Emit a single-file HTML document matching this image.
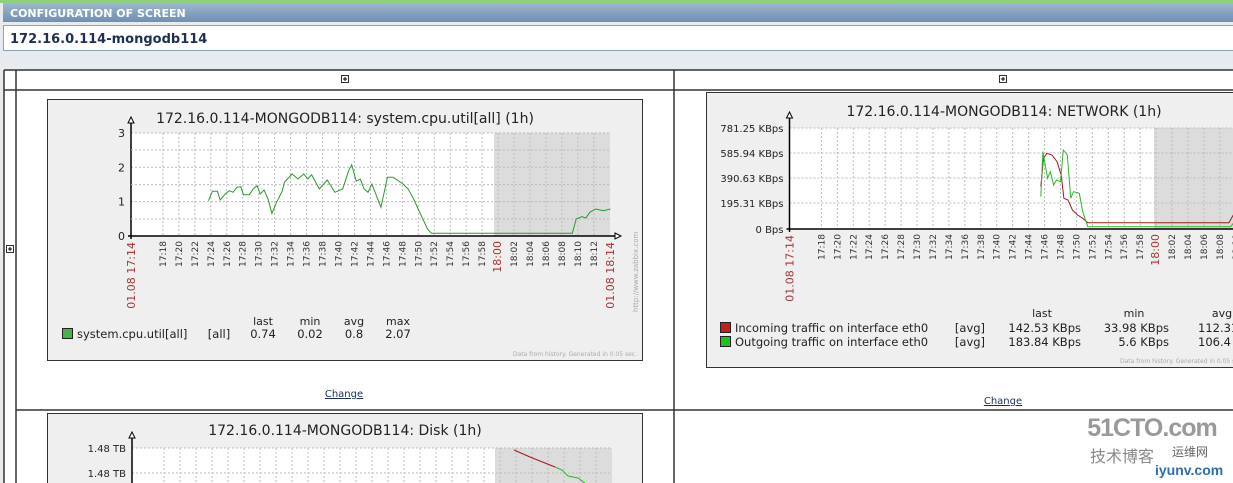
<!DOCTYPE html>
<html><head><meta charset="utf-8"><style>
body{margin:0;width:1233px;height:483px;overflow:hidden;background:#e8ebee;font-family:"DejaVu Sans","Liberation Sans",sans-serif;}
svg{position:absolute;left:0;top:0}
</style></head><body>
<svg id="s" width="1233" height="483" xmlns="http://www.w3.org/2000/svg" font-family="DejaVu Sans, Liberation Sans, sans-serif" overflow="hidden">
<defs><linearGradient id="hg" x1="0" y1="0" x2="0" y2="1"><stop offset="0" stop-color="#9fb6cf"/><stop offset="1" stop-color="#6f8fb2"/></linearGradient></defs>
<rect x="0" y="0" width="1233" height="483" fill="#e8ebee"/>
<rect x="0" y="0" width="1233" height="3" fill="#8fd07a"/>
<rect x="3" y="3" width="1230" height="19" fill="url(#hg)"/>
<text x="10" y="17" font-size="11" font-weight="bold" fill="#fff">CONFIGURATION OF SCREEN</text>
<rect x="3.5" y="25.5" width="1230" height="25" fill="#fff" stroke="#8aa2bc"/>
<text x="10" y="43" font-size="13" font-weight="bold" fill="#1d2f55">172.16.0.114-mongodb114</text>
<rect x="4" y="70" width="1229" height="413" fill="#fff"/>
<g stroke="#333" stroke-width="1.5" fill="none">
<line x1="4" y1="70" x2="1233" y2="70"/>
<line x1="4" y1="70" x2="4" y2="483"/>
<line x1="16" y1="70" x2="16" y2="483"/>
<line x1="674" y1="70" x2="674" y2="483"/>
<line x1="16" y1="90" x2="1233" y2="90"/>
<line x1="16" y1="410" x2="1233" y2="410"/>
<line x1="4" y1="90" x2="16" y2="90"/>
</g>
<g id="plus"></g>
<g id="c1"></g><g id="c2"></g><g id="c3"></g>
<text x="344" y="397" font-size="10" fill="#1d2f55" text-anchor="middle" text-decoration="underline">Change</text>
<text x="1003" y="404" font-size="10" fill="#1d2f55" text-anchor="middle" text-decoration="underline">Change</text>
<text x="1152" y="436" font-size="25" font-weight="bold" fill="#999" text-anchor="middle" font-family="Liberation Sans, sans-serif" letter-spacing="-1">51CTO.com</text>
<text x="1090" y="462" font-size="16" fill="#888" font-family="Noto Sans CJK SC, sans-serif">技术博客</text>
<text x="1172" y="456" font-size="12" fill="#666" font-family="Noto Sans CJK SC, sans-serif">运维网</text>
<text x="1155" y="475" font-size="14" font-weight="bold" fill="#2a6fb0" font-family="Liberation Sans, sans-serif">iyunv.com</text>
</svg>
<script>
var NS="http://www.w3.org/2000/svg";
function el(p,t,a,txt){var e=document.createElementNS(NS,t);for(var k in a)e.setAttribute(k,a[k]);if(txt!=null)e.textContent=txt;document.getElementById(p).appendChild(e);return e;}
function plus(x,y){el("plus","rect",{x:x-3.5,y:y-3.5,width:7,height:7,fill:"#fff",stroke:"#333"});el("plus","line",{x1:x-2,y1:y,x2:x+2,y2:y,stroke:"#000"});el("plus","line",{x1:x,y1:y-2,x2:x,y2:y+2,stroke:"#000"});}
plus(345,79);plus(1003,79);plus(10,249);
function chart(id,o){
 el(id,"rect",{x:o.bx+.5,y:o.by+.5,width:o.bw,height:o.bh,fill:"#efefef",stroke:"#333"});
 el(id,"rect",{x:o.x0,y:o.ytop,width:o.gx-o.x0,height:o.y0-o.ytop,fill:"#fff"});
 el(id,"rect",{x:o.gx,y:o.ytop,width:o.x1-o.gx,height:o.y0-o.ytop,fill:"#dcdcdc"});
 el(id,"text",{x:o.tx,y:o.ty,"font-size":14,fill:"#222","text-anchor":"middle"},o.title);
 var ppm=o.ppm;
 for(var m=4;m<60;m+=2){var x=o.x0+m*ppm;if(x>o.x1+1)break;
  el(id,"line",{x1:x,y1:o.ytop,x2:x,y2:o.y0,stroke:"#bbb","stroke-dasharray":"2,2"});
  var hh=17+Math.floor((14+m)/60),mm=(14+m)%60;var lab=hh+":"+(mm<10?"0":"")+mm;
  if(o.labs!==false){var red=(lab=="18:00");
   el(id,"text",{x:0,y:0,"font-size":red?11:9,fill:red?"#a33":"#333","text-anchor":"end",transform:"translate("+(x+3)+","+(o.y0+5)+") rotate(-90)"},lab);}
 }
 o.yl.forEach(function(v){el(id,"line",{x1:o.x0,y1:v[0],x2:o.x1,y2:v[0],stroke:"#bbb","stroke-dasharray":"2,2"});
  el(id,"text",{x:o.x0-6,y:v[0]+4,"font-size":o.yfs||11,fill:"#222","text-anchor":"end"},v[1]);});
 el(id,"line",{x1:o.x0,y1:o.ytop-10,x2:o.x0,y2:o.y0+3,stroke:"#000","stroke-width":1.5});
 el(id,"line",{x1:o.x0-3,y1:o.y0,x2:o.x1+5,y2:o.y0,stroke:"#000","stroke-width":1.5});
 el(id,"path",{d:"M"+(o.x0-3)+" "+(o.ytop-10)+"l3 -6 3 6z",fill:"#fff",stroke:"#000"});
 if(o.arrowR)el(id,"path",{d:"M"+(o.x1+5)+" "+(o.y0-3)+"l6 3 -6 3z",fill:"#fff",stroke:"#000"});
 if(o.labs!==false){
 el(id,"text",{x:0,y:0,"font-size":11,fill:"#a33","text-anchor":"end",transform:"translate("+(o.x0+4)+","+(o.y0+6)+") rotate(-90)"},"01.08 17:14");
 if(o.endlab)el(id,"text",{x:0,y:0,"font-size":11,fill:"#a33","text-anchor":"end",transform:"translate("+(o.x1+4)+","+(o.y0+6)+") rotate(-90)"},"01.08 18:14");}
}
function curve(id,pts,fx,fy,col){var d=pts.map(function(p,i){return (i?"L":"M")+fx(p[0]).toFixed(1)+" "+fy(p[1]).toFixed(1);}).join(" ");
 el(id,"path",{d:d,fill:"none",stroke:col,"stroke-width":1});}
chart("c1",{bx:47,by:99,bw:595,bh:261,x0:131,x1:610,gx:494,ytop:133,y0:236,ppm:7.98,tx:345,ty:123,title:"172.16.0.114-MONGODB114: system.cpu.util[all] (1h)",
 yl:[[133,"3"],[167.3,"2"],[201.6,"1"],[236,"0"]],arrowR:true,endlab:true});
[150,184.6,219].forEach(function(y){el("c1","line",{x1:131,y1:y,x2:610,y2:y,stroke:"#bbb","stroke-dasharray":"2,2"});});
var p1=[[435,320],[445,292],[458,292],[465,318],[478,300],[488,290],[498,295],[508,280],[518,278],[525,302],[540,302],[550,285],[560,275],[568,300],[578,288],[588,315],[598,358],[610,325],[625,290],[630,265],[650,240],[665,255],[680,240],[690,255],[700,242],[720,285],[740,258],[760,295],[780,285],[795,230],[803,212],[815,262],[825,255],[835,285],[845,295],[855,270],[878,340],[895,250],[910,250],[935,270],[948,285],[960,310],[980,360],[998,405],[1008,418],[1370,418],[1380,375],[1395,368],[1405,372],[1415,355],[1430,345],[1450,350],[1468,345]];
curve("c1",p1,function(x){return 47+(x-20)/2.57},function(y){return 99+(y-15)/3},"#2a9a2a");
el("c1","text",{x:0,y:0,"font-size":7,fill:"#aaa",transform:"translate(638,312) rotate(-90)"},"http://www.zabbix.com");
[["last",263],["min",310],["avg",354],["max",398]].forEach(function(a){el("c1","text",{x:a[1],y:325,"font-size":11,fill:"#222","text-anchor":"middle"},a[0]);});
el("c1","rect",{x:62.5,y:328.5,width:10,height:10,fill:"#4caf4c",stroke:"#222"});
el("c1","text",{x:77,y:338,"font-size":11.5,fill:"#222"},"system.cpu.util[all]");
[["[all]",219],["0.74",263],["0.02",310],["0.8",354],["2.07",398]].forEach(function(a){el("c1","text",{x:a[1],y:338,"font-size":11.5,fill:"#222","text-anchor":"middle"},a[0]);});
el("c1","text",{x:637,y:356,"font-size":6,fill:"#aaa","text-anchor":"end"},"Data from history. Generated in 0.05 sec.");
chart("c2",{bx:706,by:92,bw:540,bh:275,x0:789.5,x1:1240,gx:1154,ytop:128,y0:229,ppm:7.97,tx:1004,ty:116,title:"172.16.0.114-MONGODB114: NETWORK (1h)",
 yl:[[128,"781.25 KBps"],[153,"585.94 KBps"],[178,"390.63 KBps"],[203,"195.31 KBps"],[229,"0 Bps"]],yfs:10});
var fx2=function(x){return 700+x/2.94},fy2=function(y){return 85+y/3};
curve("c2",[[1002,305],[1010,220],[1020,205],[1035,210],[1050,230],[1062,270],[1070,340],[1082,345],[1095,375],[1110,390],[1125,400],[1140,413],[1555,413],[1568,390]],fx2,fy2,"#a01818");
curve("c2",[[1002,335],[1008,200],[1015,240],[1022,280],[1030,260],[1040,300],[1048,285],[1060,290],[1068,195],[1080,210],[1090,340],[1098,320],[1115,325],[1125,380],[1140,425],[1560,425],[1568,415]],fx2,fy2,"#2ab82a");
[["last",1042],["min",1134],["avg",1222]].forEach(function(a){el("c2","text",{x:a[1],y:317,"font-size":11,fill:"#222","text-anchor":"middle"},a[0]);});
el("c2","rect",{x:720.5,y:322.5,width:10,height:10,fill:"#c02020",stroke:"#222"});
el("c2","rect",{x:720.5,y:336.5,width:10,height:10,fill:"#20c020",stroke:"#222"});
[[332,"Incoming traffic on interface eth0","142.53 KBps","33.98 KBps","112.31 KBps"],[346,"Outgoing traffic on interface eth0","183.84 KBps","5.6 KBps","106.4 KBps"]].forEach(function(r){
 el("c2","text",{x:735,y:r[0],"font-size":11.5,fill:"#222"},r[1]);
 el("c2","text",{x:970,y:r[0],"font-size":11.5,fill:"#222","text-anchor":"middle"},"[avg]");
 el("c2","text",{x:1081,y:r[0],"font-size":11.5,fill:"#222","text-anchor":"end"},r[2]);
 el("c2","text",{x:1169,y:r[0],"font-size":11.5,fill:"#222","text-anchor":"end"},r[3]);
 el("c2","text",{x:1198,y:r[0],"font-size":11.5,fill:"#222"},r[4]);});
el("c2","text",{x:1120,y:363,"font-size":6,fill:"#aaa"},"Data from history. Generated in 0.05 sec.");
chart("c3",{bx:47,by:413,bw:595,bh:75,x0:132,x1:612,gx:495,ytop:448,y0:500,ppm:8.0,tx:345,ty:435,title:"172.16.0.114-MONGODB114: Disk (1h)",
 yl:[[448,"1.48 TB"],[473,"1.48 TB"]],yfs:10,labs:false});
curve("c3",[[514,450],[530,457],[545,463],[555,467]],function(x){return x},function(y){return y},"#a01818");
curve("c3",[[555,467],[562,470],[568,476],[578,478],[585,483]],function(x){return x},function(y){return y},"#2ab82a");
</script>
</body></html>
